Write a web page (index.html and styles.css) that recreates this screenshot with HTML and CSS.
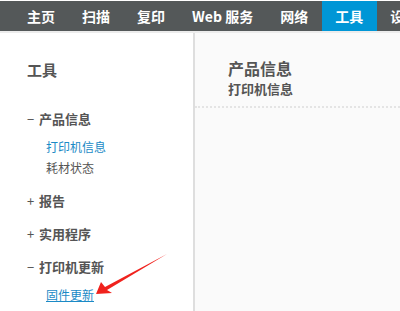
FILE: index.html
```html
<!DOCTYPE html>
<html lang="zh">
<head>
  <meta charset="UTF-8">
  <title>工具</title>
  <link rel="stylesheet" href="styles.css">
</head>
<body>

  <nav class="topnav">
    <a class="tab">主页</a>
    <a class="tab">扫描</a>
    <a class="tab">复印</a>
    <a class="tab">Web 服务</a>
    <a class="tab">网络</a>
    <a class="tab active">工具</a>
    <a class="tab">设置</a>
  </nav>

  <div class="main">
    <aside class="sidebar">
      <h2 class="side-title">工具</h2>

      <div class="group">
        <div class="group-head"><span class="sign">−</span>产品信息</div>
        <a class="item link">打印机信息</a>
        <a class="item">耗材状态</a>
      </div>

      <div class="group">
        <div class="group-head"><span class="sign">+</span>报告</div>
      </div>

      <div class="group">
        <div class="group-head"><span class="sign">+</span>实用程序</div>
      </div>

      <div class="group">
        <div class="group-head"><span class="sign">−</span>打印机更新</div>
        <a class="item link underline">固件更新</a>
      </div>
    </aside>

    <section class="content">
      <div class="content-head">
        <h1>产品信息</h1>
        <h3>打印机信息</h3>
      </div>
    </section>
  </div>

  <!-- 标注箭头 -->
  <svg class="arrow" width="400" height="311" viewBox="0 0 400 311">
    <polygon points="96,294 101,282 105,287 167,254 107,290 112,293" fill="#f0221d"/>
  </svg>

</body>
</html>
```

FILE: styles.css
```css
body {
  font-family: "Noto Sans CJK SC", "Noto Sans", sans-serif;
  margin: 0;
  background-color: #fff;
  color: #555;
  position: relative;
  height: 311px;
  overflow: hidden;
}

.topnav {
  display: flex;
  margin-top: 1px;
  height: 30px;
  background-color: #545859;
  padding-left: 13.5px;
  white-space: nowrap;
  overflow: hidden;
}

.tab {
  display: flex;
  align-items: center;
  padding: 0 13.5px;
  color: #fff;
  font-size: 14px;
  font-weight: bold;
  line-height: 30px;
  flex-shrink: 0;
}

.tab.active {
  background-color: #0096d6;
}

.main {
  display: flex;
  border-top: 2px solid #ececec;
  height: 278px;
}

.sidebar {
  width: 195px;
  flex-shrink: 0;
  border-right: 2px solid #dedede;
  padding: 27px 0 0 27px;
  box-sizing: border-box;
}

.side-title {
  font-size: 15px;
  font-weight: bold;
  margin: 0 0 29px;
  line-height: 20px;
}

.group {
  margin-bottom: 13px;
}

.group-head {
  font-size: 13px;
  font-weight: bold;
  line-height: 20px;
  margin-bottom: 7px;
}

.sign {
  display: inline-block;
  width: 12px;
  font-weight: normal;
}

.item {
  display: block;
  margin-left: 19px;
  font-size: 12px;
  line-height: 21px;
  color: #555;
}

.link {
  color: #1b8ac6;
}

.underline {
  text-decoration: underline;
}

.content {
  flex: 1;
  background-color: #fafafa;
}

.content-head {
  padding: 24px 0 7px 33px;
  border-bottom: 2px dotted #e4e4e4;
}

.content-head h1 {
  font-size: 16px;
  font-weight: bold;
  margin: 0;
  line-height: 22px;
}

.content-head h3 {
  font-size: 13px;
  font-weight: bold;
  margin: 0;
  line-height: 20px;
}

.arrow {
  position: absolute;
  left: 0;
  top: 0;
  pointer-events: none;
}
```
